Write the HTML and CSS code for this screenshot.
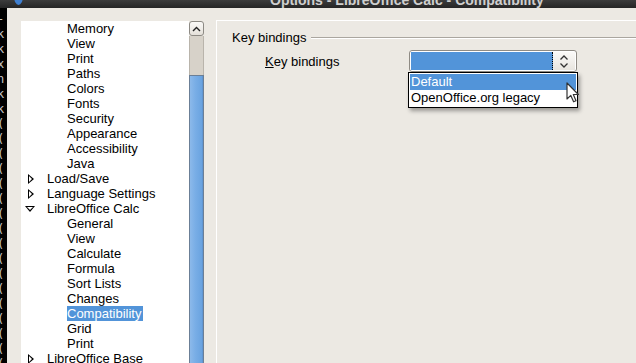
FILE: index.html
```html
<!DOCTYPE html>
<html lang="en">
<head>
    <meta charset="UTF-8">
    <title>Options - LibreOffice Calc - Compatibility</title>
    <link rel="stylesheet" href="styles.css">
</head>
<body>
    <div class="titlebar">
        <span class="app-icon"></span>
        <span class="title">Options - LibreOffice Calc - Compatibility</span>
    </div>

    <div class="main">
        <!-- terminal window showing behind the dialog -->
        <div class="desktop-edge">
            <pre>-
k
k
x
n
k
k
(
(
(
(
(
(
(
(
(
(
(
(
(
(
(
(
(</pre>
        </div>

        <div class="dialog">
            <div class="tree-wrap">
                <ul class="tree">
                    <li class="child">Memory</li>
                    <li class="child">View</li>
                    <li class="child">Print</li>
                    <li class="child">Paths</li>
                    <li class="child">Colors</li>
                    <li class="child">Fonts</li>
                    <li class="child">Security</li>
                    <li class="child">Appearance</li>
                    <li class="child">Accessibility</li>
                    <li class="child">Java</li>
                    <li class="parent"><span class="arrow closed"></span>Load/Save</li>
                    <li class="parent"><span class="arrow closed"></span>Language Settings</li>
                    <li class="parent"><span class="arrow open"></span>LibreOffice Calc</li>
                    <li class="child">General</li>
                    <li class="child">View</li>
                    <li class="child">Calculate</li>
                    <li class="child">Formula</li>
                    <li class="child">Sort Lists</li>
                    <li class="child">Changes</li>
                    <li class="child"><span class="selected">Compatibility</span></li>
                    <li class="child">Grid</li>
                    <li class="child">Print</li>
                    <li class="parent"><span class="arrow closed"></span>LibreOffice Base</li>
                </ul>
                <div class="scrollbar">
                    <div class="sb-btn">
                        <svg width="9" height="6" viewBox="0 0 9 6"><path d="M1 5 L4.5 1.5 L8 5" fill="none" stroke="#222" stroke-width="1.4"/></svg>
                    </div>
                    <div class="sb-trough"></div>
                    <div class="sb-thumb"></div>
                </div>
            </div>

            <div class="page">
                <div class="group-head">
                    <span>Key bindings</span>
                    <span class="group-line"></span>
                </div>
                <div class="field-row">
                    <label class="field-label"><u>K</u>ey bindings</label>
                    <div class="combo">
                        <div class="combo-value"></div>
                        <div class="combo-btn">
                            <svg width="10" height="15" viewBox="0 0 10 15">
                                <path d="M1.5 5.5 L5 2 L8.5 5.5" fill="none" stroke="#333" stroke-width="1.3"/>
                                <path d="M1.5 9.5 L5 13 L8.5 9.5" fill="none" stroke="#333" stroke-width="1.3"/>
                            </svg>
                        </div>
                        <ul class="dropdown">
                            <li class="sel">Default</li>
                            <li>OpenOffice.org legacy</li>
                        </ul>
                    </div>
                </div>
            </div>
        </div>
    </div>

    <svg class="cursor" width="14" height="22" viewBox="0 0 14 22">
        <path d="M1 1 L1 17 L4.8 13.4 L7.6 19.8 L10 18.8 L7.3 12.5 L12.4 12.5 Z" fill="#fff" stroke="#333" stroke-width="1.2" stroke-linejoin="round"/>
    </svg>
</body>
</html>
```

FILE: styles.css
```css
:root {
    --dialog-bg: #ECE9E3;
    --select-blue: #5294D9;
    --text: #000;
}

* {
    margin: 0;
    padding: 0;
    box-sizing: border-box;
}

body {
    width: 636px;
    height: 363px;
    overflow: hidden;
    background: var(--dialog-bg);
    font-family: 'Liberation Sans', Arial, sans-serif;
    font-size: 13px;
    color: var(--text);
    position: relative;
}

/* Barra de titulo (solo se ve el borde inferior) */
.titlebar {
    height: 8px;
    overflow: hidden;
    display: flex;
    align-items: flex-end;
    background: linear-gradient(#3c3c3c, #252525);
}

.app-icon {
    width: 9px;
    height: 18px;
    margin: 0 0 3px 14px;
    border-radius: 50%;
    background: #3f7fd0;
    flex-shrink: 0;
}

.title {
    margin: 0 0 3px 247px;
    line-height: 10px;
    font-weight: bold;
    font-size: 14px;
    color: #cfcfcf;
    white-space: nowrap;
}

.main {
    display: flex;
    height: 355px;
}

.desktop-edge {
    width: 7px;
    background: #000;
    overflow: hidden;
    direction: rtl;
}

.desktop-edge pre {
    direction: ltr;
    font-family: 'DejaVu Sans Mono', monospace;
    font-size: 12px;
    line-height: 15px;
    color: #c8c8c8;
    margin-left: -3px;
    padding-top: 4px;
}

.dialog {
    flex: 1;
    display: flex;
    background: var(--dialog-bg);
}

/* Arbol de opciones */
.tree-wrap {
    display: flex;
    margin: 13px 0 0 14px;
}

.tree {
    list-style: none;
    width: 168px;
    background: #fff;
}

.tree li {
    height: 15px;
    line-height: 15px;
    white-space: nowrap;
    display: flex;
    align-items: center;
}

.tree .child {
    padding-left: 46px;
}

.tree .parent {
    padding-left: 6px;
}

.selected {
    background: var(--select-blue);
    color: #fff;
    padding-right: 2px;
}

.arrow {
    width: 20px;
    height: 15px;
    position: relative;
}

.arrow.closed::before {
    content: '';
    position: absolute;
    left: 1px;
    top: 3px;
    border-left: 6px solid #000;
    border-top: 5px solid transparent;
    border-bottom: 5px solid transparent;
}

.arrow.closed::after {
    content: '';
    position: absolute;
    left: 2px;
    top: 5px;
    border-left: 3px solid #fff;
    border-top: 3px solid transparent;
    border-bottom: 3px solid transparent;
}

.arrow.open::before {
    content: '';
    position: absolute;
    left: -2px;
    top: 5px;
    border-top: 6px solid #000;
    border-left: 5px solid transparent;
    border-right: 5px solid transparent;
}

.arrow.open::after {
    content: '';
    position: absolute;
    left: 0px;
    top: 6px;
    border-top: 3px solid #fff;
    border-left: 3px solid transparent;
    border-right: 3px solid transparent;
}

.scrollbar {
    width: 15px;
    display: flex;
    flex-direction: column;
}

.sb-btn {
    height: 15px;
    border: 1px solid #8d8a84;
    border-radius: 3px;
    background: linear-gradient(#fbfaf8, #e4e0d9);
    display: flex;
    align-items: center;
    justify-content: center;
}

.sb-trough {
    height: 39px;
    background: #d7d2c9;
    border-left: 1px solid #b9b4ab;
    border-right: 1px solid #b9b4ab;
}

.sb-thumb {
    flex: 1;
    border: 1px solid #6b7f96;
    border-bottom: none;
    background: linear-gradient(90deg, #8cb9ea, #79aee6 40%, #6aa3e0 90%, #5b8fcb);
}

/* Pagina de la derecha */
.page {
    flex: 1;
    margin: 12px 0 0 12px;
    border-left: 1px solid #fff;
    border-top: 1px solid #fff;
    padding: 9px 0 0 15px;
    position: relative;
}

.group-head {
    display: flex;
    align-items: center;
    height: 15px;
    line-height: 15px;
}

.group-line {
    flex: 1;
    height: 2px;
    margin-left: 5px;
    border-top: 1px solid #aaa69f;
    border-bottom: 1px solid #fff;
}

.field-row {
    display: flex;
    align-items: center;
    margin-top: 5px;
}

.field-label {
    width: 177px;
    padding-left: 33px;
    white-space: nowrap;
}

.combo {
    position: relative;
    width: 168px;
    height: 22px;
    border: 1px solid #8f8b84;
    border-radius: 3px;
    background: #fff;
    display: flex;
    padding: 1px;
}

.combo-value {
    flex: 1;
    background: var(--select-blue);
    border-right: 1px dotted #000;
}

.combo-btn {
    width: 22px;
    display: flex;
    align-items: center;
    justify-content: center;
    background: linear-gradient(#fbfaf8, #e8e5df);
}

.dropdown {
    position: absolute;
    top: 21px;
    left: -2px;
    width: 170px;
    list-style: none;
    background: #fff;
    border: 1px solid #000;
    padding: 1px;
    box-shadow: 2px 3px 4px rgba(0, 0, 0, 0.35);
}

.dropdown li {
    height: 16px;
    line-height: 16px;
    padding-left: 1px;
    white-space: nowrap;
}

.dropdown .sel {
    background: var(--select-blue);
    color: #fff;
}

.cursor {
    position: absolute;
    left: 566px;
    top: 82px;
}
```
